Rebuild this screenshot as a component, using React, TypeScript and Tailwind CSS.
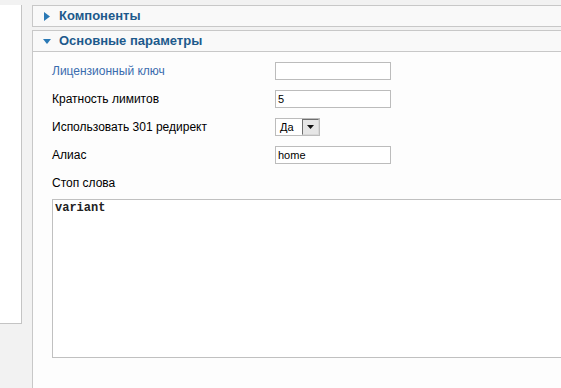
export default function App() {
  const rows = [
    { label: 'Лицензионный ключ', value: '', blue: true },
    { label: 'Кратность лимитов', value: '5' },
  ];

  return (
    <div className="w-[561px] h-[388px] overflow-hidden bg-[#f2f2f2] flex font-['Liberation_Sans',Arial,sans-serif]">
      {/* left column */}
      <div className="w-[22px] shrink-0 mt-[5px] h-[319px] bg-white border-r border-b border-[#c4c4c4]" />

      {/* main */}
      <div className="ml-[10px] w-[600px] shrink-0 pt-[5px] flex flex-col">
        <div className="h-[22px] flex items-center bg-[#f9f9f9] border border-[#c8c8c8] pl-[11px]">
          <svg width="6" height="9" viewBox="0 0 6 9" className="mr-[9px]">
            <path d="M0 0L6 4.5L0 9Z" fill="#2a79b5" />
          </svg>
          <span className="text-[13px] font-bold text-[#1d5a8c]">Компоненты</span>
        </div>

        <div className="mt-[3px] flex-1 flex flex-col border-l border-t border-[#c8c8c8] bg-[#fdfdfd]">
          <div className="h-[21px] flex items-center bg-[#f9f9f9] border-b border-[#c8c8c8] pl-[10px]">
            <svg width="8" height="5" viewBox="0 0 8 5" className="mr-[8px]">
              <path d="M0 0H8L4 5Z" fill="#2a79b5" />
            </svg>
            <span className="text-[13px] font-bold text-[#1d5a8c]">Основные параметры</span>
          </div>

          <div className="pl-[19px] pt-[10px] flex flex-col gap-[10px] text-[12px]">
            {rows.map(r => (
              <div key={r.label} className="h-[18px] flex items-center">
                <span className={`w-[223px] ${r.blue ? 'text-[#3a6cae]' : 'text-black'}`}>{r.label}</span>
                <div className="w-[116px] h-[18px] border border-[#bcbcbc] bg-white flex items-center pl-[2px] text-[11px] text-black">
                  {r.value}
                </div>
              </div>
            ))}

            <div className="h-[18px] flex items-center">
              <span className="w-[223px] text-black">Использовать 301 редирект</span>
              <div className="w-[45px] h-[18px] border border-[#bcbcbc] bg-white flex items-center">
                <span className="flex-1 pl-[4px] text-[11px] text-black">Да</span>
                <div className="w-[17px] h-[16px] bg-[#e6e6e6] border-t border-l border-[#6f6f6f] border-r border-b border-r-[#d8d8d8] border-b-[#d8d8d8] flex items-center justify-center">
                  <svg width="7" height="4" viewBox="0 0 7 4">
                    <path d="M0 0H7L3.5 4Z" fill="#111" />
                  </svg>
                </div>
              </div>
            </div>

            <div className="h-[18px] flex items-center">
              <span className="w-[223px] text-black">Алиас</span>
              <div className="w-[116px] h-[18px] border border-[#bcbcbc] bg-white flex items-center pl-[2px] text-[11px] text-black">
                home
              </div>
            </div>

            <div className="h-[18px] flex items-center">
              <span className="text-black">Стоп слова</span>
            </div>
          </div>

          <div className="ml-[19px] mt-[7px] h-[159px] border border-[#c0c0c0] bg-white px-[2px] pt-[1px] font-['Liberation_Mono','Courier_New',monospace] text-[12px] font-bold text-[#222] leading-[14px]">
            variant
          </div>
        </div>
      </div>
    </div>
  );
}
